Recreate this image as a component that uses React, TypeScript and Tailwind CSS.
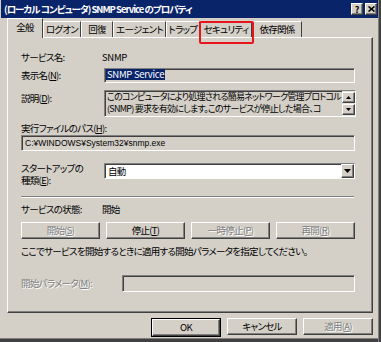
import type { ReactNode } from 'react';

// classic 3D borders
const raised =
  'border border-t-white border-l-white border-r-[#404040] border-b-[#404040] shadow-[inset_-1px_-1px_0_#808080]';
const sunken =
  'border border-t-[#808080] border-l-[#808080] border-r-white border-b-white shadow-[inset_1px_1px_0_#404040]';
const dim = 'text-[#808080] [text-shadow:1px_1px_0_#fff]';

const TABS = [
  { label: '全般', w: 36 },
  { label: 'ログオン', w: 38 },
  { label: '回復', w: 32 },
  { label: 'エージェント', w: 53 },
  { label: 'トラップ', w: 34 },
  { label: 'セキュリティ', w: 52 },
  { label: '依存関係', w: 50 },
];

function Key({ k }: { k: string }) {
  return (
    <>
      (<span className="underline">{k}</span>)
    </>
  );
}

function Btn({ children, disabled, w = 'w-[79px]' }: { children: ReactNode; disabled?: boolean; w?: string }) {
  return (
    <div className={`${raised} ${w} h-[17px] flex items-center justify-center whitespace-nowrap ${disabled ? dim : 'text-black'}`}>
      {children}
    </div>
  );
}

function Arrow({ up }: { up?: boolean }) {
  return (
    <div className={`${raised} w-[13px] h-[11px] flex items-center justify-center bg-[#d4d0c8]`}>
      <svg width="5" height="3" viewBox="0 0 5 3">
        {up ? <path d="M2.5 0 L5 3 L0 3 Z" fill="#000" /> : <path d="M0 0 L5 0 L2.5 3 Z" fill="#000" />}
      </svg>
    </div>
  );
}

export default function App() {
  return (
    <div className="relative w-[381px] h-[342px] overflow-hidden bg-[#d4d0c8] font-['Noto_Sans_CJK_JP','Noto_Sans',sans-serif] text-[9.5px] leading-[13px] tracking-[-0.7px] text-black [font-feature-settings:'palt']">
      {/* title bar */}
      <div className="ml-[1px] w-[378px] h-[18px] bg-[#0a246a] flex items-center pl-[3px] pr-[2px]">
        <span className="flex-1 text-white font-bold text-[9.5px] tracking-[-1px] whitespace-nowrap">
          (ローカル コンピュータ) SNMP Service のプロパティ
        </span>
        <div className="flex gap-[2px] tracking-normal">
          <div className={`${raised} w-[12px] h-[12px] bg-[#d4d0c8] flex items-center justify-center text-[9px] font-bold leading-none`}>?</div>
          <div className={`${raised} w-[12px] h-[12px] bg-[#d4d0c8] flex items-center justify-center`}>
            <svg width="7" height="6" viewBox="0 0 7 6">
              <path d="M0.5 0.5 L6.5 5.5 M6.5 0.5 L0.5 5.5" stroke="#000" strokeWidth="1.6" />
            </svg>
          </div>
        </div>
      </div>

      {/* tabs */}
      <div className="flex items-end h-[19px] pl-[7px]">
        {TABS.map((t, i) => (
          <div
            key={t.label}
            style={{ width: t.w }}
            className={
              i === 0
                ? 'relative z-10 -mb-px h-[20px] bg-[#d4d0c8] border-t border-l border-white border-r border-r-[#404040] flex items-center justify-center whitespace-nowrap pb-[2px]'
                : 'h-[16px] border-t border-l border-white border-r border-r-[#404040] flex items-center justify-center whitespace-nowrap'
            }
          >
            {t.label}
          </div>
        ))}
      </div>

      {/* red highlight */}
      <div className="absolute left-[199px] top-[21px] w-[55px] h-[23px] border-2 border-[#e8141c] rounded-[2px]" />

      {/* panel */}
      <div className="ml-[7px] w-[366px] h-[276px] border border-t-white border-l-white border-r-[#404040] border-b-[#404040] shadow-[inset_-1px_-1px_0_#808080] pl-[13px] flex flex-col">
        <div className="mt-[13px] flex h-[13px]">
          <div className="w-[81px]">サービス名:</div>
          <div className="tracking-[-0.3px]">SNMP</div>
        </div>

        <div className="mt-[3px] flex items-center h-[16px]">
          <div className="w-[83px]">
            表示名<Key k="N" />:
          </div>
          <div className={`${sunken} w-[251px] h-[15px] flex items-start pl-[1px]`}>
            <span className="bg-[#0a246a] text-white px-[1px] leading-[11px] tracking-[-0.3px]">SNMP Service</span>
          </div>
        </div>

        <div className="mt-[7px] flex items-start h-[27px]">
          <div className="w-[83px] pt-[2px]">
            説明<Key k="D" />:
          </div>
          <div className={`${sunken} w-[252px] h-[27px] flex`}>
            <div className="flex-1 pl-[2px] text-[9px] leading-[12px] tracking-[-0.75px] whitespace-nowrap overflow-hidden">
              <div>このコンピュータにより処理される簡易ネットワーク管理プロトコル</div>
              <div>(SNMP) 要求を有効にします。このサービスが停止した場合、コ</div>
            </div>
            <div className="w-[13px] flex flex-col justify-between bg-[#e4e2dc] pt-[1px] pb-px">
              <Arrow up />
              <Arrow />
            </div>
          </div>
        </div>

        <div className="mt-[5px] h-[13px]">
          実行ファイルのパス<Key k="H" />:
        </div>
        <div className={`${sunken} w-[334px] h-[16px] flex items-center pl-[3px] text-[8.5px] tracking-normal font-['Liberation_Sans','Noto_Sans_CJK_JP',sans-serif]`}>
          C:¥WINDOWS¥System32¥snmp.exe
        </div>

        <div className="mt-[11px] flex items-start h-[23px]">
          <div className="w-[83px] leading-[12px]">
            <div>スタートアップの</div>
            <div>
              種類<Key k="E" />:
            </div>
          </div>
          <div className={`${sunken} w-[251px] h-[16px] bg-white flex items-center mt-[1px]`}>
            <div className="flex-1 pl-[3px]">自動</div>
            <div className={`${raised} w-[13px] h-[14px] bg-[#d4d0c8] flex items-center justify-center`}>
              <svg width="7" height="4" viewBox="0 0 7 4">
                <path d="M0 0 L7 0 L3.5 4 Z" fill="#000" />
              </svg>
            </div>
          </div>
        </div>

        <div className="mt-[11px] w-[333px] h-[2px] border-t border-t-[#808080] border-b border-b-white" />

        <div className="mt-[5px] flex h-[13px]">
          <div className="w-[81px]">サービスの状態:</div>
          <div>開始</div>
        </div>

        <div className="mt-[6px] flex gap-[6px]">
          <Btn disabled>
            開始<Key k="S" />
          </Btn>
          <Btn>
            停止<Key k="T" />
          </Btn>
          <Btn disabled>
            一時停止<Key k="P" />
          </Btn>
          <Btn disabled>
            再開<Key k="R" />
          </Btn>
        </div>

        <div className="mt-[6px] h-[13px] whitespace-nowrap">
          ここでサービスを開始するときに適用する開始パラメータを指定してください。
        </div>

        <div className="mt-[17px] flex items-center h-[17px]">
          <div className={`w-[101px] ${dim}`}>
            開始パラメータ<Key k="M" />:
          </div>
          <div className={`${sunken} w-[233px] h-[17px]`} />
        </div>
      </div>

      {/* dialog buttons */}
      <div className="mt-[5px] flex justify-end gap-[6px] pr-[8px]">
        <div className="border border-black">
          <Btn w="w-[68px]">OK</Btn>
        </div>
        <Btn w="w-[70px]">キャンセル</Btn>
        <Btn disabled w="w-[70px]">
          適用<Key k="A" />
        </Btn>
      </div>

      {/* window right / bottom edge */}
      <div className="absolute left-0 right-0 bottom-0 h-[4px] border-t border-t-[#808080] bg-[#404040]" />
      <div className="absolute top-0 bottom-0 right-0 w-[3px] border-l border-l-[#808080] bg-[#404040]" />
    </div>
  );
}
